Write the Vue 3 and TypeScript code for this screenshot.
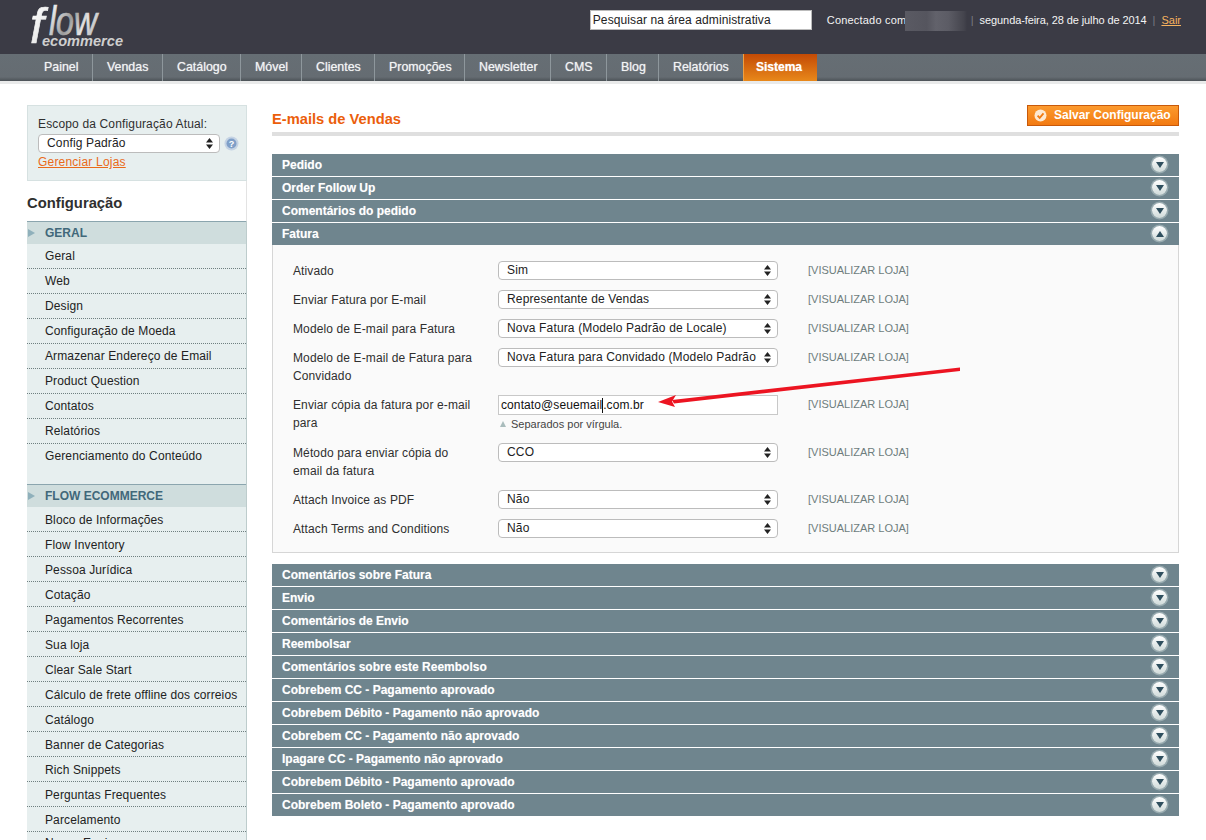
<script setup lang="ts">
const navItems = [
  { label: 'Painel', width: 63 },
  { label: 'Vendas', width: 70 },
  { label: 'Catálogo', width: 78 },
  { label: 'Móvel', width: 61 },
  { label: 'Clientes', width: 73 },
  { label: 'Promoções', width: 90 },
  { label: 'Newsletter', width: 86 },
  { label: 'CMS', width: 56 },
  { label: 'Blog', width: 52 },
  { label: 'Relatórios', width: 84 },
]
const geral = ['Geral', 'Web', 'Design', 'Configuração de Moeda', 'Armazenar Endereço de Email', 'Product Question', 'Contatos', 'Relatórios', 'Gerenciamento do Conteúdo']
const flow = ['Bloco de Informações', 'Flow Inventory', 'Pessoa Jurídica', 'Cotação', 'Pagamentos Recorrentes', 'Sua loja', 'Clear Sale Start', 'Cálculo de frete offline dos correios', 'Catálogo', 'Banner de Categorias', 'Rich Snippets', 'Perguntas Frequentes', 'Parcelamento', 'Nossa Equipe']
const before = ['Pedido', 'Order Follow Up', 'Comentários do pedido']
const after = ['Comentários sobre Fatura', 'Envio', 'Comentários de Envio', 'Reembolsar', 'Comentários sobre este Reembolso', 'Cobrebem CC - Pagamento aprovado', 'Cobrebem Débito - Pagamento não aprovado', 'Cobrebem CC - Pagamento não aprovado', 'Ipagare CC - Pagamento não aprovado', 'Cobrebem Débito - Pagamento aprovado', 'Cobrebem Boleto - Pagamento aprovado']
interface Row { label: string; value: string; input?: boolean; note?: string }
const rows: Row[] = [
  { label: 'Ativado', value: 'Sim' },
  { label: 'Enviar Fatura por E-mail', value: 'Representante de Vendas' },
  { label: 'Modelo de E-mail para Fatura', value: 'Nova Fatura (Modelo Padrão de Locale)' },
  { label: 'Modelo de E-mail de Fatura para Convidado', value: 'Nova Fatura para Convidado (Modelo Padrão' },
  { label: 'Enviar cópia da fatura por e-mail para', value: 'contato@seuemail.com.br', input: true, note: 'Separados por vírgula.' },
  { label: 'Método para enviar cópia do email da fatura', value: 'CCO' },
  { label: 'Attach Invoice as PDF', value: 'Não' },
  { label: 'Attach Terms and Conditions', value: 'Não' },
]
</script>

<template>
  <div class="page">
    <header class="top">
      <svg class="logo" width="130" height="54" viewBox="0 0 130 54">
        <defs>
          <linearGradient id="flowGrad" gradientUnits="userSpaceOnUse" x1="0" y1="8" x2="66" y2="42">
            <stop offset="0" stop-color="#ffffff" />
            <stop offset="0.3" stop-color="#e8e8e8" />
            <stop offset="0.55" stop-color="#9a9a9a" />
            <stop offset="0.75" stop-color="#e4e4e4" />
            <stop offset="1" stop-color="#b0b0b0" />
          </linearGradient>
        </defs>
        <g class="logo-flow">
          <text x="0" y="43" font-size="50">f</text>
          <text x="19" y="35" font-size="41" textLength="48" lengthAdjust="spacingAndGlyphs">low</text>
        </g>
        <text class="logo-sub" x="12" y="46" font-size="15.5" textLength="81" lengthAdjust="spacingAndGlyphs">ecommerce</text>
      </svg>
      <div class="top-right">
        <input class="search" type="text" value="Pesquisar na área administrativa" />
        <span class="user">Conectado com</span><span class="blur"></span>
        <span class="pipe">|</span>
        <span class="date">segunda-feira, 28 de julho de 2014</span>
        <span class="pipe second">|</span>
        <a class="logout">Sair</a>
      </div>
    </header>
    <nav class="nav">
      <a v-for="n in navItems" :key="n.label" class="nav-item" :style="{ width: n.width + 'px' }">{{ n.label }}</a>
      <a class="nav-item active">Sistema</a>
    </nav>
    <div class="nav-shade"></div>

    <div class="content">
      <aside class="side">
        <div class="scope">
          <div class="scope-label">Escopo da Configuração Atual:</div>
          <div class="scope-line">
            <div class="select-wrap scope-select">
              <select class="sel"><option>Config Padrão</option></select>
              <svg class="arrows" width="7" height="11" viewBox="0 0 7 11"><path d="M3.5 0 7 4.4H0zM3.5 11 0 6.6h7z" fill="#222" /></svg>
            </div>
            <svg class="help" width="15" height="15" viewBox="0 0 15 15">
              <circle cx="7.5" cy="7.5" r="7" fill="#c5d3e4" />
              <circle cx="7.5" cy="7.5" r="5" fill="#7f9fc8" />
              <text x="7.5" y="11" text-anchor="middle" font-size="9" font-weight="700" fill="#fff" font-family="Liberation Sans, sans-serif">?</text>
            </svg>
          </div>
          <a class="manage">Gerenciar Lojas</a>
        </div>
        <h3 class="side-title">Configuração</h3>
        <div class="side-group">
          <div class="group-head"><i class="tri"></i>GERAL</div>
          <a v-for="i in geral" :key="i" class="side-item">{{ i }}</a>
        </div>
        <div class="side-spacer"></div>
        <div class="side-group flow-group">
          <div class="group-head"><i class="tri"></i>FLOW ECOMMERCE</div>
          <a v-for="i in flow" :key="i" class="side-item">{{ i }}</a>
        </div>
      </aside>

      <main class="main">
        <div class="title-bar">
          <h3 class="title">E-mails de Vendas</h3>
          <button class="save">
            <svg width="13" height="13" viewBox="0 0 13 13"><circle cx="6.5" cy="6.5" r="6" fill="#fde9d2" /><path d="M3.6 6.6 5.7 8.8 9.5 4.4" fill="none" stroke="#f07a12" stroke-width="1.8" /></svg>
            Salvar Configuração
          </button>
        </div>

        <div class="sections">
          <div v-for="s in before" :key="s" class="sec-head">
            {{ s }}
            <span class="toggle"><i class="down"></i></span>
          </div>
          <div class="sec-head open">
            Fatura
            <span class="toggle"><i class="up"></i></span>
          </div>
          <div class="sec-body">
            <div v-for="r in rows" :key="r.label" class="row">
              <div class="lab">{{ r.label }}</div>
              <div class="val">
                <template v-if="r.input">
                  <div class="input-box">
                    <span>contato@seuemail</span><i class="caret"></i><span>.com.br</span>
                    <svg class="red-arrow" width="310" height="50" viewBox="0 0 310 50">
                      <path d="M306 3.5 18 36 20 39.5 306 7z" fill="#ec1421" />
                      <path d="M4 38 22 31 18 37.5 21 43z" fill="#ec1421" />
                    </svg>
                  </div>
                  <div class="note"><i class="note-tri"></i>{{ r.note }}</div>
                </template>
                <div v-else class="select-wrap">
                  <select class="sel"><option>{{ r.value }}</option></select>
                  <svg class="arrows" width="7" height="11" viewBox="0 0 7 11"><path d="M3.5 0 7 4.4H0zM3.5 11 0 6.6h7z" fill="#222" /></svg>
                </div>
              </div>
              <div class="scope-tag">[VISUALIZAR LOJA]</div>
            </div>
          </div>
          <div v-for="s in after" :key="s" class="sec-head">
            {{ s }}
            <span class="toggle"><i class="down"></i></span>
          </div>
        </div>
      </main>
    </div>
  </div>
</template>

<style>
html, body { margin: 0; background: #fff; overflow: hidden; }
</style>

<style scoped>
.page {
  width: 1206px;
  height: 840px;
  overflow: hidden;
  font-family: "Liberation Sans", Arial, sans-serif;
  font-size: 12px;
  color: #2f2f2f;
}
a { cursor: pointer; }
.top {
  height: 54px;
  background: #3b3b45;
  display: flex;
  justify-content: space-between;
  box-sizing: border-box;
}
.logo {
  display: block;
  margin-left: 30px;
  overflow: visible;
}
.logo-flow text {
  font-family: "Liberation Sans", sans-serif;
  font-style: italic;
  fill: url(#flowGrad);
  stroke: url(#flowGrad);
  stroke-width: 0.7px;
}
.logo-sub {
  font-family: "Liberation Sans", sans-serif;
  font-style: italic;
  font-weight: 700;
  fill: #cfcfcf;
}
.top-right {
  display: flex;
  align-items: center;
  height: 40px;
  margin-right: 25px;
  color: #f4f4f4;
  font-size: 11px;
  white-space: nowrap;
}
.search {
  width: 222px;
  height: 20px;
  box-sizing: border-box;
  border: 1px solid #bbb;
  background: #fff;
  padding: 0 2px;
  margin-right: 15px;
  font: 12px "Liberation Sans", sans-serif;
  letter-spacing: 0.1px;
  color: #222;
  outline: none;
}
.user { width: 78px; letter-spacing: 0.2px; }
.date { letter-spacing: -0.09px; }
.blur {
  display: block;
  width: 62px;
  height: 20px;
  margin-top: 2px;
  background: linear-gradient(90deg, #5a5a63 0%, #55555e 35%, #62626b 50%, #5c5c65 70%, #44444d 95%, #3b3b45 100%);
}
.pipe { color: #7a7a82; margin: 0 6px 0 4px; }
.pipe.second { margin-left: 6px; }
.logout { color: #f7b35f; text-decoration: underline; }

.nav {
  height: 27px;
  background: linear-gradient(#666e74, #656c72 85%, #4c5257);
  display: flex;
  padding-left: 30px;
}
.nav-item {
  padding: 0 0 0 14px;
  line-height: 26px;
  color: #f2f4f5;
  font-size: 12.4px;
  font-weight: 400;
  text-shadow: 0 0 1px rgba(255,255,255,.7);
  border-right: 1px solid #8e979c;
  height: 27px;
  box-sizing: border-box;
  white-space: nowrap;
}
.nav-item:nth-child(10) { border-right: 0; }
.nav-item.active {
  background: linear-gradient(#c34a05, #e8881a);
  border: 0;
  border-left: 1px solid #f0a040;
  color: #fff;
  font-weight: 700;
  font-size: 12px;
  padding: 0 0 0 12px;
  width: 74px;
}
.nav-shade { height: 3px; background: #e9eaea; }

.content {
  display: flex;
  align-items: flex-start;
  padding: 21px 27px 0;
  gap: 25px;
}
.side { width: 220px; flex: none; }
.scope {
  height: 76px;
  box-sizing: border-box;
  background: #e7efef;
  border: 1px solid #d6e1e1;
  padding: 11px 6px 0 10px;
}
.scope-label { line-height: 15px; margin-bottom: 2px; letter-spacing: 0.15px; }
.scope-line { display: flex; align-items: center; gap: 4px; }
.select-wrap { position: relative; width: 280px; height: 19px; }
.scope-select { width: 182px; flex: none; }
.sel {
  appearance: none;
  -webkit-appearance: none;
  width: 100%;
  height: 100%;
  box-sizing: border-box;
  display: block;
  border: 1px solid #bcbcbc;
  border-radius: 4px;
  background: #fff;
  padding: 0 20px 1px 8px;
  font: 12px "Liberation Sans", sans-serif;
  letter-spacing: 0.15px;
  color: #222;
  outline: none;
}
.arrows { position: absolute; right: 7px; top: 4px; }
.help { flex: none; }
.manage { color: #ea6a1a; text-decoration: underline; line-height: 18px; display: block; letter-spacing: 0.2px; }
.side-title {
  margin: 0;
  height: 40px;
  line-height: 44px;
  font-size: 14.8px;
  font-weight: 700;
  color: #2f2f2f;
  border-right: 1px solid #e3e3e3;
}
.side-group {
  background: #e7efef;
  border-right: 1px solid #bdcccc;
}
.side-spacer { height: 15px; background: #e7efef; border-right: 1px solid #bdcccc; }
.group-head {
  height: 23px;
  box-sizing: border-box;
  background: #cfdddd;
  border-top: 1px solid #8ba5ae;
  color: #41687a;
  font-weight: 700;
  line-height: 22px;
  padding-left: 18px;
  position: relative;
}
.tri {
  position: absolute;
  left: 1px;
  top: 7px;
  border-left: 7px solid #8fb0bb;
  border-top: 4px solid transparent;
  border-bottom: 4px solid transparent;
}
.side-item {
  display: block;
  height: 25px;
  box-sizing: border-box;
  line-height: 25px;
  padding-left: 18px;
  color: #222;
  border-bottom: 1px dotted #6f7f80;
  white-space: nowrap;
  letter-spacing: 0.12px;
}
.flow-group .side-item { line-height: 27px; }
.flow-group .side-item:last-child { line-height: 23px; }
.side-group .side-item:last-child { border-bottom: 0; }

.main { width: 907px; flex: none; }
.title-bar {
  height: 27px;
  border-bottom: 4px solid #dfdfdf;
  display: flex;
  justify-content: space-between;
  align-items: flex-start;
  margin-bottom: 18px;
}
.title {
  margin: 5px 0 0;
  font-size: 14.7px;
  line-height: 18px;
  font-weight: 700;
  color: #eb5e0b;
}
.save {
  width: 152px;
  height: 21px;
  box-sizing: border-box;
  border: 1px solid #c8590a;
  background: linear-gradient(#fc9a2e, #f27a12);
  color: #fff;
  font: 700 12px "Liberation Sans", sans-serif;
  display: flex;
  align-items: center;
  gap: 7px;
  padding: 0 0 1px 6px;
  white-space: nowrap;
}
.sections { display: flex; flex-direction: column; }
.sec-head {
  height: 22px;
  line-height: 23px;
  margin-bottom: 1px;
  background: #6f858e;
  color: #fff;
  font-weight: 700;
  font-size: 12px;
  padding-left: 10px;
  position: relative;
  text-shadow: 0 0 1px rgba(255,255,255,.4);
}
.sec-head.open { margin-bottom: 0; }
.toggle {
  position: absolute;
  right: 12px;
  top: 3px;
  width: 15px;
  height: 15px;
  border-radius: 50%;
  background: linear-gradient(#fff, #cfdad9);
  box-shadow: 0 0 0 1.5px rgba(200,215,215,.45);
  display: flex;
  align-items: center;
  justify-content: center;
}
.down, .up { display: block; width: 0; height: 0; border-left: 4px solid transparent; border-right: 4px solid transparent; }
.down { border-top: 6px solid #2f4f5e; }
.up { border-bottom: 6px solid #2f4f5e; }
.sec-body {
  background: #fafafa;
  border: 1px solid #d6d6d6;
  border-top: 0;
  padding: 16px 20px 0;
  height: 308px;
  box-sizing: border-box;
  margin-bottom: 11px;
}
.row {
  display: grid;
  grid-template-columns: 205px 310px auto;
  padding-bottom: 10px;
}
.lab { line-height: 18px; width: 180px; padding-top: 1px; letter-spacing: 0.12px; }
.val { width: 280px; }
.input-box {
  position: relative;
  height: 20px;
  box-sizing: border-box;
  border: 1px solid #c8c8c8;
  background: #fff;
  padding-left: 2px;
  line-height: 18px;
  color: #111;
  display: flex;
  align-items: center;
  letter-spacing: 0.1px;
}
.caret { width: 1px; height: 15px; background: #111; }
.red-arrow { position: absolute; left: 155px; top: -32px; }
.note { font-size: 11px; line-height: 14px; margin: 2px 0; color: #444; display: flex; align-items: center; gap: 5px; padding-left: 2px; }
.note-tri { border-bottom: 6px solid #a9bcbc; border-left: 3.5px solid transparent; border-right: 3.5px solid transparent; }
.scope-tag { font-size: 11px; color: #6e7d7d; line-height: 18px; }
</style>
